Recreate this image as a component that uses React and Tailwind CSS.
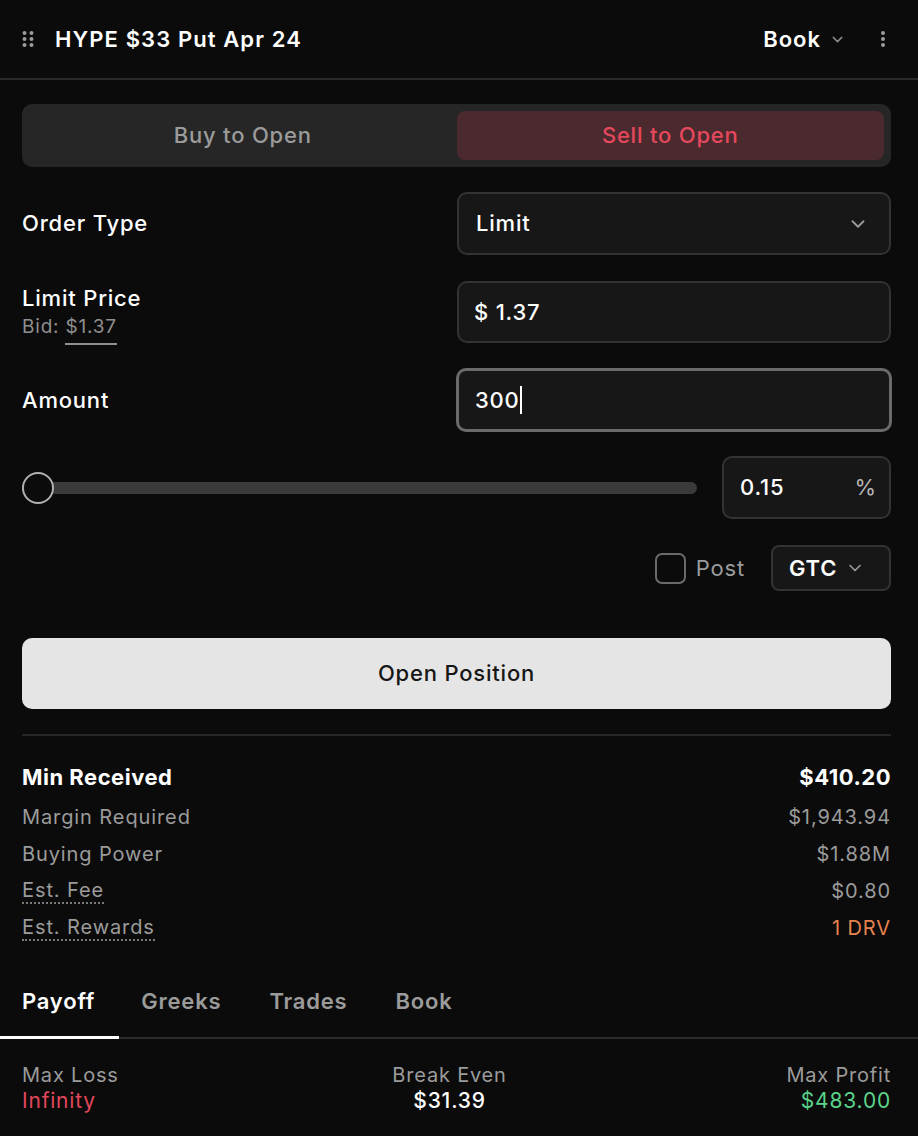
import { useState } from "react";

function Chevron({ className = "" }) {
  return (
    <svg viewBox="0 0 24 24" className={className} fill="none" stroke="currentColor" strokeWidth="2" strokeLinecap="round" strokeLinejoin="round">
      <path d="M6 9l6 6 6-6" />
    </svg>
  );
}

function Grip() {
  return (
    <svg width="12" height="18" viewBox="0 0 12 18" className="text-[#9b9b9b]">
      {[3, 9, 15].map((y) => (
        <g key={y}>
          <circle cx="2.5" cy={y} r="2" fill="currentColor" />
          <circle cx="9.5" cy={y} r="2" fill="currentColor" />
        </g>
      ))}
    </svg>
  );
}

function Kebab() {
  return (
    <svg width="6" height="18" viewBox="0 0 6 18" className="text-[#9b9b9b]">
      <circle cx="3" cy="3" r="2" fill="currentColor" />
      <circle cx="3" cy="9" r="2" fill="currentColor" />
      <circle cx="3" cy="15" r="2" fill="currentColor" />
    </svg>
  );
}

function Stat({ label, value, className = "", labelClass = "" }) {
  return (
    <div className="flex items-center justify-between h-[37px]">
      <span className={labelClass}>{label}</span>
      <span className={className}>{value}</span>
    </div>
  );
}

export default function App() {
  const [side, setSide] = useState("sell");
  const [tab, setTab] = useState("Payoff");

  return (
    <div className="w-[918px] h-[1136px] overflow-hidden bg-[#0b0b0b] text-white font-['Inter',sans-serif] tracking-[0.8px]">
      {/* Header */}
      <div className="h-[80px] border-b-2 border-[#2a2a2a] flex items-center justify-between pl-[22px] pr-[32px]">
        <div className="flex items-center gap-[21px]">
          <Grip />
          <span className="text-[22px] font-semibold tracking-[1.1px]">HYPE $33 Put Apr 24</span>
        </div>
        <div className="flex items-center">
          <span className="text-[22px] font-semibold tracking-[1px]">Book</span>
          <Chevron className="w-[17px] h-[17px] ml-[8px] text-[#8a8a8a]" />
          <div className="ml-[34px]">
            <Kebab />
          </div>
        </div>
      </div>

      <div className="pl-[22px] pr-[27px] pt-[24px]">
        {/* Side toggle */}
        <div className="h-[63px] rounded-[10px] bg-[#262626] p-[7px] flex">
          <button
            onClick={() => setSide("buy")}
            className={`flex-1 rounded-[8px] text-[22px] font-medium ${side === "buy" ? "bg-[#1f3a2c] text-[#5ad38a]" : "text-[#9b9b9b]"}`}
          >
            Buy to Open
          </button>
          <button
            onClick={() => setSide("sell")}
            className={`flex-1 rounded-[8px] text-[22px] font-medium ${side === "sell" ? "bg-[#4a2a2e] text-[#e5485c]" : "text-[#9b9b9b]"}`}
          >
            Sell to Open
          </button>
        </div>

        {/* Order type */}
        <div className="mt-[25px] flex items-center justify-between">
          <span className="text-[22px] font-medium">Order Type</span>
          <div className="w-[434px] h-[63px] rounded-[10px] border-2 border-[#333] bg-[#171717] flex items-center justify-between pl-[17px] pr-[20px]">
            <span className="text-[22px] font-medium">Limit</span>
            <Chevron className="w-[22px] h-[22px] text-[#9b9b9b]" />
          </div>
        </div>

        {/* Limit price */}
        <div className="mt-[26px] flex items-center justify-between">
          <div className="flex flex-col">
            <span className="text-[22px] font-medium leading-[30px]">Limit Price</span>
            <span className="text-[19px] text-[#8f8f8f] leading-[28px]">
              Bid: <span className="border-b-2 border-[#8f8f8f] pb-[5px]">$1.37</span>
            </span>
          </div>
          <div className="w-[434px] h-[62px] rounded-[10px] border-2 border-[#333] bg-[#171717] flex items-center pl-[15px]">
            <span className="text-[22px] font-medium">$ 1.37</span>
          </div>
        </div>

        {/* Amount */}
        <div className="mt-[25px] flex items-center justify-between">
          <span className="text-[22px] font-medium">Amount</span>
          <div className="w-[436px] h-[64px] -mr-[1px] rounded-[10px] border-[3px] border-[#6a6a6a] bg-[#171717] flex items-center pl-[16px]">
            <span className="text-[22px] font-medium">300</span>
            <span className="w-[2px] h-[28px] bg-white" />
          </div>
        </div>

        {/* Slider */}
        <div className="mt-[24px] flex items-center gap-[25px]">
          <div className="flex-1 relative h-[63px] flex items-center">
            <div className="w-full h-[12px] rounded-full bg-[#3a3a3a]" />
            <div className="absolute left-0 top-1/2 -translate-y-1/2 w-[32px] h-[32px] rounded-full border-2 border-[#b0b0b0] bg-[#0b0b0b]" />
          </div>
          <div className="w-[169px] h-[63px] rounded-[10px] border-2 border-[#333] bg-[#171717] flex items-center justify-between pl-[16px] pr-[12px]">
            <span className="text-[22px] font-medium">0.15</span>
            <span className="text-[22px] text-[#b5b5b5]">%</span>
          </div>
        </div>

        {/* Post / GTC */}
        <div className="mt-[26px] flex items-center justify-end">
          <div className="w-[31px] h-[31px] rounded-[7px] border-2 border-[#6a6a6a]" />
          <span className="ml-[10px] text-[22px] text-[#9b9b9b]">Post</span>
          <div className="ml-[26px] w-[120px] h-[46px] rounded-[8px] border-2 border-[#333] bg-[#171717] flex items-center pl-[16px] gap-[8px]">
            <span className="text-[22px] font-semibold">GTC</span>
            <Chevron className="w-[20px] h-[20px] text-[#9b9b9b]" />
          </div>
        </div>

        {/* Submit */}
        <button className="mt-[47px] w-full h-[71px] rounded-[10px] bg-[#e5e5e5] text-[#161616] text-[22px] font-medium">
          Open Position
        </button>

        <div className="mt-[25px] h-[2px] bg-[#262626]" />

        {/* Stats */}
        <div className="pt-[22px] text-[20px] text-[#9b9b9b] tracking-[0.9px]">
          <div className="flex items-center justify-between h-[38px] text-[22px] font-bold text-white mb-[2px] tracking-[0.5px]">
            <span>Min Received</span>
            <span>$410.20</span>
          </div>
          <Stat label="Margin Required" value="$1,943.94" />
          <Stat label="Buying Power" value="$1.88M" />
          <Stat label="Est. Fee" value="$0.80" labelClass="border-b-2 border-dotted border-[#7a7a7a] leading-[24px]" />
          <Stat
            label="Est. Rewards"
            value="1 DRV"
            className="text-[#e8834f]"
            labelClass="border-b-2 border-dotted border-[#7a7a7a] leading-[24px]"
          />
        </div>
      </div>

      {/* Tabs */}
      <div className="mt-[21px] flex border-b-2 border-[#2a2a2a]">
        {["Payoff", "Greeks", "Trades", "Book"].map((t) => (
          <button
            key={t}
            onClick={() => setTab(t)}
            className={`h-[72px] pl-[22px] pr-[26px] first:pr-[24px] text-[22px] font-semibold border-b-[3px] -mb-[2px] ${tab === t ? "text-white border-white" : "text-[#9b9b9b] border-transparent"}`}
          >
            {t}
          </button>
        ))}
      </div>

      {/* Payoff summary */}
      <div className="pl-[22px] pr-[27px] pt-[24px] flex justify-between text-[20px] leading-[25px]">
        <div className="flex flex-col">
          <span className="text-[#9b9b9b]">Max Loss</span>
          <span className="text-[#e0475b] text-[21px]">Infinity</span>
        </div>
        <div className="flex flex-col items-center -ml-[6px]">
          <span className="text-[#9b9b9b]">Break Even</span>
          <span className="text-[21px] font-medium">$31.39</span>
        </div>
        <div className="flex flex-col items-end">
          <span className="text-[#9b9b9b]">Max Profit</span>
          <span className="text-[#5ad38a] text-[21px]">$483.00</span>
        </div>
      </div>
    </div>
  );
}
